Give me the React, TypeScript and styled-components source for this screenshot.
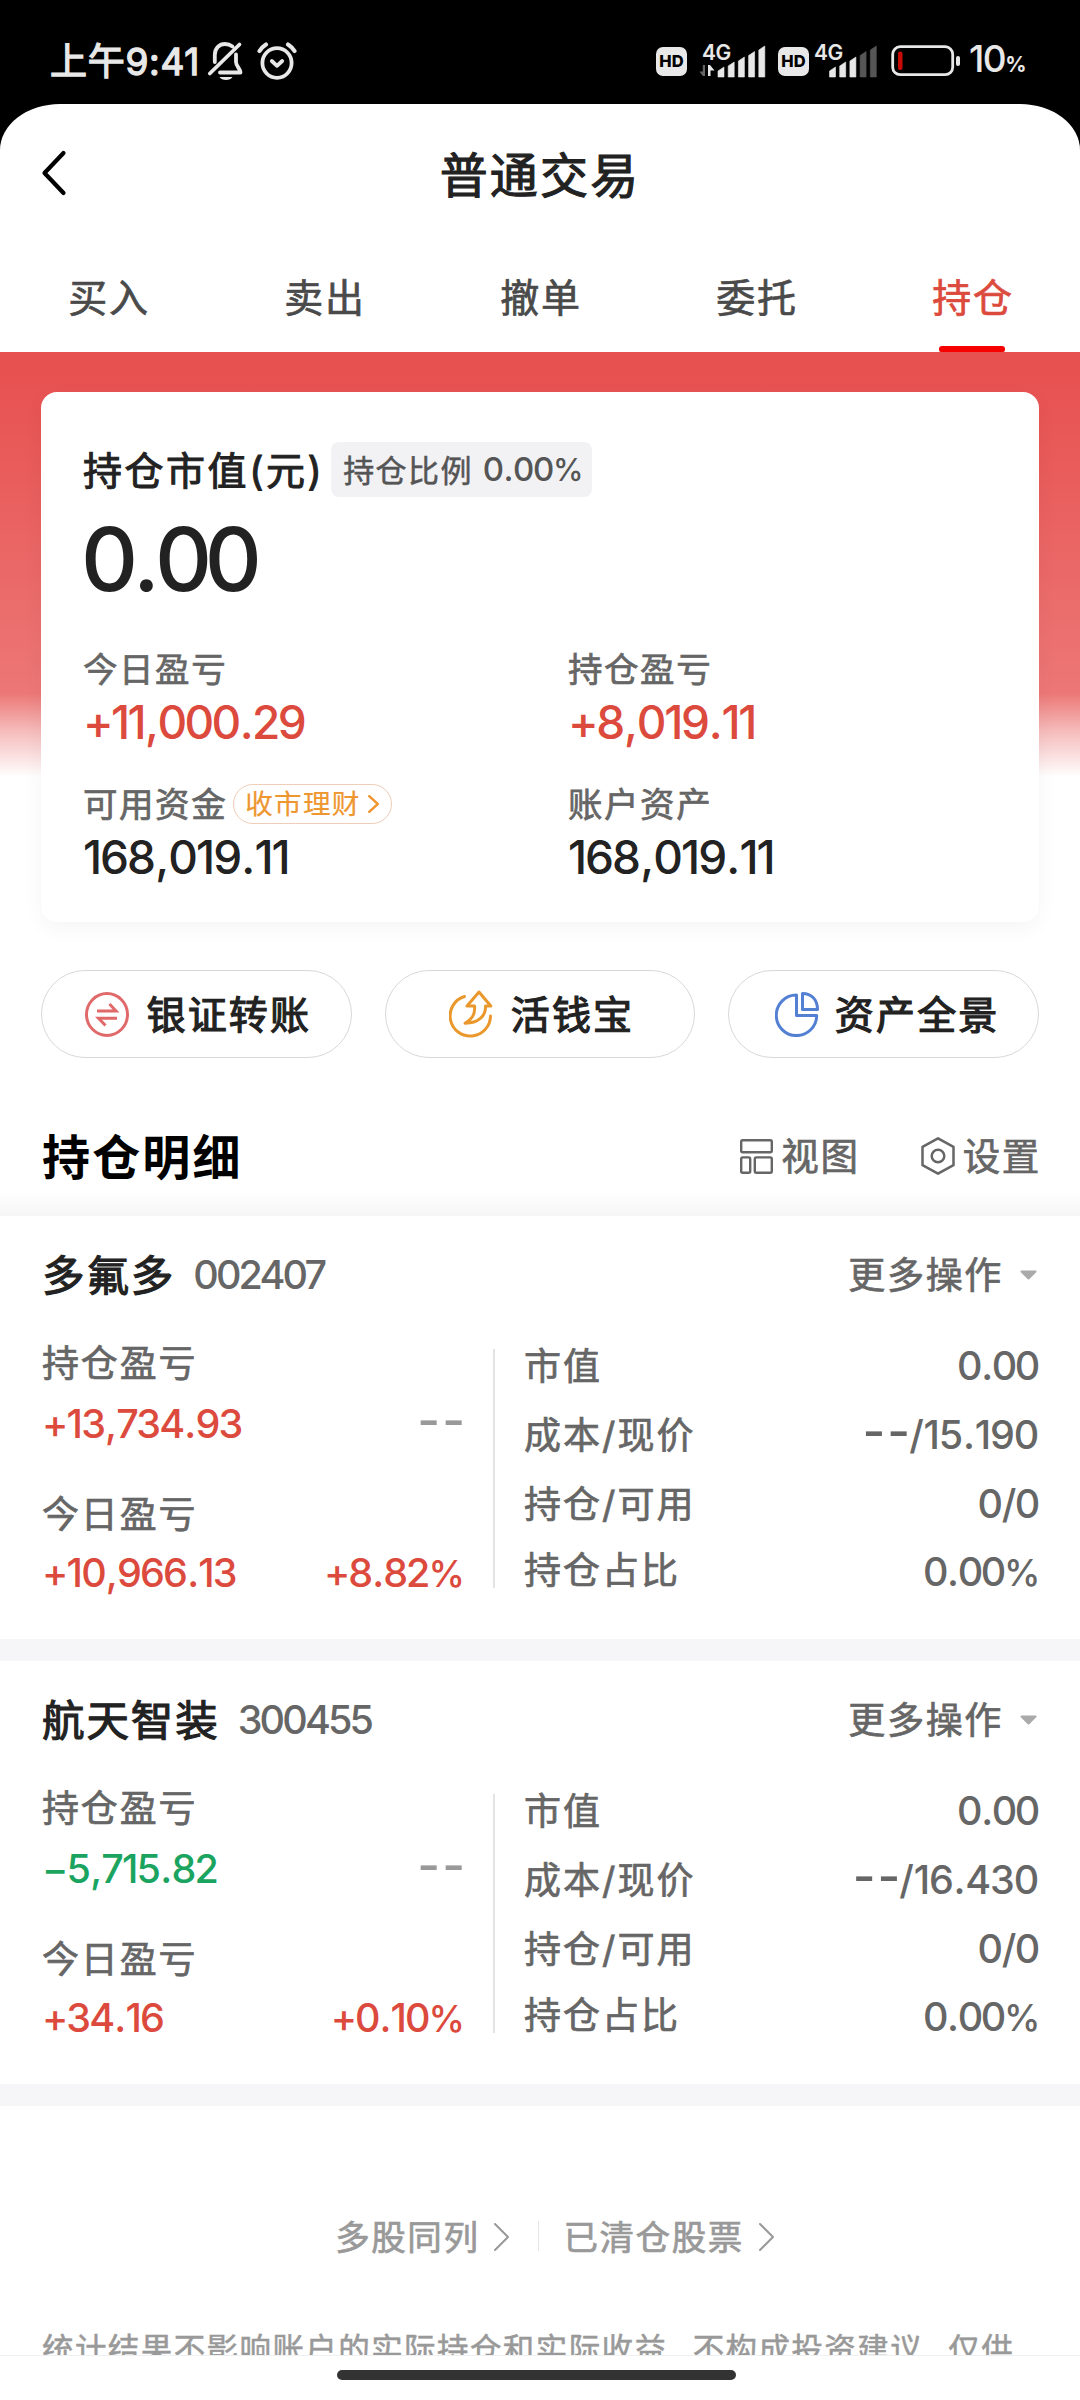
import React from 'react';
import styled, { createGlobalStyle } from 'styled-components';

const RED = '#dc4a3d';
const GREEN = '#1aa45f';

const GlobalStyle = createGlobalStyle`
  * { box-sizing: border-box; }
  html, body { margin: 0; padding: 0; background: #000; }
  body {
    font-family: Inter, "Noto Sans CJK SC", "Noto Sans", sans-serif;
    color: #222;
  }
  svg { display: block; flex: none; }
`;

const Screen = styled.div`
  width: 1080px;
  height: 2400px;
  overflow: hidden;
  display: flex;
  flex-direction: column;
  background: #000;
`;

interface TextProps {
  $size: number;
  $color?: string;
  $weight?: number;
  $stroke?: number;
  $lh?: number;
  $top?: number;
  $track?: number;
}

/* Chinese copy: slightly open tracking, thickened a touch by a hairline stroke */
const Text = styled.span<TextProps>`
  display: block;
  white-space: nowrap;
  padding-top: ${p => p.$top ?? 2}px;
  font-size: ${p => p.$size}px;
  line-height: ${p => p.$lh ?? 46}px;
  color: ${p => p.$color ?? '#666'};
  font-weight: ${p => p.$weight ?? 400};
  letter-spacing: ${p => p.$track ?? 0.045}em;
  -webkit-text-stroke: ${p => p.$stroke ?? 0.7}px currentColor;
`;

/* Figures: tightened tracking */
const NumBox = styled.span<TextProps>`
  display: block;
  white-space: nowrap;
  font-size: ${p => p.$size}px;
  line-height: ${p => p.$lh ?? 46}px;
  color: ${p => p.$color ?? '#666'};
  font-weight: ${p => p.$weight ?? 550};
  letter-spacing: ${p => p.$track ?? -0.05}em;
`;

const Mark = styled.span`
  margin: 0 0.025em;
`;

const PercentSign = styled.span`
  font-size: 0.93em;
`;

const Dash = styled.span`
  margin-right: -0.08em;
  font-size: 1.25em;
  line-height: 0;
  letter-spacing: 0.04em;
`;

/* Prints a figure, giving its separators some air */
function Num({ children, ...rest }: TextProps & { children: string }) {
  return (
    <NumBox {...rest}>
      {children.split(/(--|[.,/%])/).filter(Boolean).map((part, i) => {
        if (part === '--') return <Dash key={i}>{part}</Dash>;
        if (part === '%') return <PercentSign key={i}>{part}</PercentSign>;
        if (/^[.,/]$/.test(part)) return <Mark key={i}>{part}</Mark>;
        return part;
      })}
    </NumBox>
  );
}

/* ---------- status bar ---------- */

const StatusBar = styled.header`
  flex: none;
  height: 104px;
  padding: 26px 55px 0 50px;
  display: flex;
  justify-content: space-between;
`;

const StatusGroup = styled.div`
  display: flex;
  align-items: center;
  height: 70px;
`;

const Clock = styled.span`
  font-size: 37px;
  line-height: 70px;
  padding-top: 2px;
  margin-right: 7px;
  font-weight: 400;
  letter-spacing: 0.7px;
  color: #e8e8e8;
  white-space: nowrap;
  -webkit-text-stroke: 1.3px #e8e8e8;
`;

const HdBadge = styled.span<{ $left: number }>`
  margin-left: ${p => p.$left}px;
  width: 31px;
  height: 29px;
  border-radius: 7px;
  background: #e8e8e8;
  color: #000;
  font-size: 16.5px;
  line-height: 29px;
  font-weight: 800;
  text-align: center;
`;

const Signal = styled.span<{ $left: number; $width: number }>`
  margin-left: ${p => p.$left}px;
  width: ${p => p.$width}px;
  height: 36px;
  display: grid;
`;

const NetType = styled.span<{ $indent?: number }>`
  grid-area: 1 / 1;
  padding-left: ${p => p.$indent ?? 0}px;
  font-size: 21px;
  line-height: 19px;
  font-weight: 600;
  letter-spacing: -0.5px;
  color: #e8e8e8;
`;

const SignalBars = styled.svg`
  grid-area: 1 / 1;
`;

const Percent = styled.span`
  margin-left: 8px;
  padding-top: 1px;
  font-size: 37px;
  line-height: 70px;
  font-weight: 550;
  letter-spacing: -1.5px;
  color: #e8e8e8;
  small { font-size: 21px; font-weight: 650; }
`;

const AlarmWrap = styled.span`
  margin-left: 12px;
`;

function BellOff() {
  return (
    <svg width="38" height="40" viewBox="0 0 38 40" fill="none" stroke="#e8e8e8" strokeWidth="3.8" strokeLinecap="round" strokeLinejoin="round">
      <path d="M7.800 21V14C7.800 7 12.500 3 18 3C21 3 23.500 4 25.500 5.500" />
      <path d="M29 13.500V21C29 25 33.500 28 33.500 31.500H13" />
      <path d="M2.800 32.500L32.500 3.500" />
      <path d="M12.500 36H25.500C23.500 40 14.500 40 12.500 36Z" fill="#e8e8e8" stroke="none" />
    </svg>
  );
}

function Alarm() {
  return (
    <AlarmWrap>
      <svg width="40" height="38" viewBox="0 0 40 38" fill="none" stroke="#e8e8e8" strokeWidth="3.800" strokeLinecap="round" strokeLinejoin="round">
        <ellipse cx="20" cy="21" rx="14.600" ry="14.800" />
        <path d="M14.800 19L20 23.800L25.200 19" />
        <path d="M2.500 9Q5 5 9 2.500M37.500 9Q35 5 31 2.500" strokeWidth="4.200" />
      </svg>
    </AlarmWrap>
  );
}

function Bars({ lit, x, arrows }: { lit: number; x: number; arrows?: boolean }) {
  const tops = [24, 19, 14, 8.5, 3];
  return (
    <SignalBars width="70" height="36" viewBox="0 0 70 36">
      {tops.map((t, i) => {
        const l = x + i * 10.2;
        return (
          <path
            key={t}
            d={`M${l} 34V${t + 4}L${l + 6} ${t}V34Z`}
            fill={i < lit ? '#e8e8e8' : '#565656'}
            stroke={i < lit ? '#e8e8e8' : '#565656'}
            strokeWidth="0.600"
            strokeLinejoin="round"
          />
        );
      })}
      {arrows && (
        <>
          <path d="M6 22V33H3.800L0.500 28.500H3.800V22Z" fill="#666" />
          <path d="M9 33V22H11L15.500 27.500H11.500V33Z" fill="#e8e8e8" />
        </>
      )}
    </SignalBars>
  );
}

const BatteryWrap = styled.span`
  margin-left: 14px;
`;

function Battery() {
  return (
    <BatteryWrap>
      <svg width="70" height="32" viewBox="0 0 70 32">
        <rect x="1.700" y="1.700" width="60" height="28" rx="7.500" fill="none" stroke="#e8e8e8" strokeWidth="2.800" />
        <rect x="7" y="6.500" width="4.500" height="18.500" rx="2" fill="#c80a05" />
        <rect x="65" y="11" width="4" height="10" rx="2" fill="#e8e8e8" />
      </svg>
    </BatteryWrap>
  );
}

/* ---------- page ---------- */

const Page = styled.main`
  flex: 1;
  min-height: 0;
  display: flex;
  flex-direction: column;
  background: #fff;
  border-radius: 60px 60px 0 0 / 46px 46px 0 0;
`;

const TitleBar = styled.div`
  flex: none;
  height: 138px;
  padding: 0 40px;
  display: grid;
  grid-template-columns: 60px 1fr 60px;
  align-items: center;
  justify-items: center;
  svg { justify-self: start; }
`;

const Tabs = styled.nav`
  flex: none;
  height: 110px;
  display: grid;
  grid-template-columns: repeat(5, 1fr);
`;

const Tab = styled.div<{ $active?: boolean }>`
  display: flex;
  flex-direction: column;
  align-items: center;
  justify-content: space-between;
  padding: 31px 0 0;
  &::after {
    content: '';
    width: 66px;
    height: 6px;
    border-radius: 3px 3px 2px 2px;
    background: ${p => (p.$active ? '#f60000' : 'transparent')};
  }
`;

const TabLabel = styled(Text)`
  padding-left: 2px;
`;

const Summary = styled.section`
  flex: none;
  height: 618px;
  padding: 40px 41px 0;
  background: linear-gradient(to bottom, #e75150 0, #e75150 20px, #ec7776 341px, #f6bdbd 380px, #fff 425px);
`;

const Card = styled.div`
  height: 530px;
  padding: 50px 42px 0;
  border-radius: 16px;
  background: #fff;
  box-shadow: 0 6px 22px rgba(0, 0, 0, 0.045);
`;

const CardHead = styled.div`
  display: flex;
  align-items: center;
  height: 55px;
  gap: 7px;
`;

const Chip = styled.div`
  height: 55px;
  width: 261px;
  padding-left: 12px;
  border-radius: 8px;
  background: #f2f2f4;
  display: flex;
  align-items: center;
  gap: 10px;
`;

const Total = styled.div`
  height: 124px;
  margin-left: -2px;
  display: flex;
  align-items: center;
`;

const Stats = styled.div`
  display: grid;
  grid-template-columns: 485px 1fr;
  grid-auto-rows: 135px;
  padding-top: 24px;
`;

const Stat = styled.div`
  padding-top: 1px;
`;

const StatLabel = styled.div`
  display: flex;
  align-items: center;
  height: 46px;
  gap: 6px;
  margin-bottom: 7px;
`;

const Promo = styled.div`
  height: 40px;
  width: 159px;
  padding-left: 11px;
  border: 1.5px solid #efcdb8;
  border-radius: 20px;
  display: flex;
  align-items: center;
  gap: 7px;
`;

const Actions = styled.div`
  flex: none;
  padding: 0 41px;
  display: grid;
  grid-template-columns: repeat(3, 1fr);
  gap: 33px;
  height: 88px;
`;

const Action = styled.div<{ $gap: number; $indent: number }>`
  border: 1px solid #d6d9d9;
  border-radius: 44px;
  padding-left: ${p => p.$indent}px;
  display: flex;
  align-items: center;
  justify-content: center;
  gap: ${p => p.$gap}px;
`;

const SectionHead = styled.div`
  flex: none;
  height: 158px;
  padding: 38px 39px 0 42px;
  display: flex;
  align-items: center;
  justify-content: space-between;
  background: linear-gradient(to bottom, #fff 0, #fff 134px, #f6f6f6 158px);
`;

const Tools = styled.div`
  display: flex;
  gap: 61px;
`;

const Tool = styled.div`
  display: flex;
  align-items: center;
  gap: 8px;
`;

const Stock = styled.section`
  flex: none;
  height: 445px;
  padding: 0 43px 0 42px;
  border-bottom: 22px solid #f6f6f8;
`;

const StockHead = styled.div`
  height: 118px;
  display: flex;
  align-items: center;
  gap: 18px;
`;

const More = styled.div`
  margin-left: auto;
  display: flex;
  align-items: center;
  gap: 17px;
`;

const StockBody = styled.div`
  display: grid;
  grid-template-columns: 421px 32px 1fr;
`;

const Profits = styled.div`
  display: grid;
  grid-template-rows: 62px 89px 60px 46px;
  padding-top: 5px;
`;

const ProfitRow = styled.div`
  display: flex;
  justify-content: space-between;
`;

const Rule = styled.div`
  justify-self: end;
  margin-top: 15px;
  width: 2.500px;
  height: 239px;
  background: #e4e4e4;
`;

const Details = styled.dl`
  margin: -3px -1px 0 29px;
`;

const Detail = styled.div`
  height: 69px;
  display: flex;
  align-items: center;
  justify-content: space-between;
  &:last-child > :first-child { padding: 0 0 3px; }
`;

const Links = styled.div`
  flex: none;
  height: 226px;
  padding: 108px 0 0 29px;
  display: flex;
  justify-content: center;
`;

const Link = styled.div`
  height: 46px;
  display: flex;
  align-items: center;
  gap: 15px;
`;

const LinkRule = styled.div`
  width: 1px;
  height: 30px;
  margin: 7px 24px 0 29px;
  background: #e6e6e6;
`;

const Disclaimer = styled.div`
  flex: none;
  height: 24px;
  padding-left: 42px;
  overflow: hidden;
  border-bottom: 1px solid #f0f0f0;
`;

const Comma = styled.span`
  letter-spacing: -0.2em;
  vertical-align: -5px;
  line-height: 0;
`;

const HomeBar = styled.div`
  flex: none;
  width: 399px;
  height: 10px;
  margin: 14px 0 0 337px;
  border-radius: 5px;
  background: #333;
`;

function Chevron({ w, h, color, stroke }: { w: number; h: number; color: string; stroke: number }) {
  const p = stroke / 2;
  return (
    <svg width={w} height={h} viewBox={`0 0 ${w} ${h}`} fill="none" stroke={color} strokeWidth={stroke} strokeLinecap="round" strokeLinejoin="round">
      <path d={`M${p} ${p}L${w - p} ${h / 2}L${p} ${h - p}`} />
    </svg>
  );
}

function TransferIcon() {
  return (
    <svg width="44" height="45" viewBox="0 0 44 45" fill="none" stroke="#e0696a" strokeWidth="3">
      <ellipse cx="22" cy="22.500" rx="20.500" ry="20.900" />
      <path d="M12 19H31L24.500 12" />
      <path d="M32 26.300H13.500L20.500 33.500" />
    </svg>
  );
}

function CashIcon() {
  return (
    <svg width="44" height="48" viewBox="0 0 44 48" fill="none" stroke="#ea982c" strokeWidth="3" strokeLinecap="round" strokeLinejoin="round">
      <path d="M15.500 6.500A20.200 20.200 0 1 0 41.500 26" />
      <path d="M30 2L41.800 16H36.500C37 26 29 33.500 16 33.300C22 30 26.500 24 25.500 16H18Z" />
    </svg>
  );
}

function PieIcon() {
  return (
    <svg width="44" height="45" viewBox="0 0 44 45" fill="none" stroke="#5480d4" strokeWidth="3" strokeLinejoin="round">
      <path d="M21.500 3A20.200 20.300 0 1 0 41.700 23.500H21.500Z" />
      <path d="M27.500 1.500V17.500H42.500C42.500 7.500 36.500 1.500 27.500 1.500Z" />
    </svg>
  );
}

function LayoutIcon() {
  return (
    <svg width="33" height="35" viewBox="0 0 33 35" fill="none" stroke="#666" strokeWidth="2.400">
      <rect x="1.200" y="1.200" width="30.600" height="12" rx="1.500" />
      <rect x="1.200" y="18.400" width="9" height="15.400" rx="1.500" />
      <rect x="14.800" y="18.400" width="17" height="15.400" rx="1.500" />
    </svg>
  );
}

function SettingIcon() {
  return (
    <svg width="34" height="38" viewBox="0 0 34 38" fill="none" stroke="#666" strokeWidth="2.500" strokeLinejoin="round">
      <path d="M17 1.300L32.500 9.800V28.200L17 36.700L1.500 28.200V9.800Z" />
      <circle cx="17" cy="19" r="6.300" />
    </svg>
  );
}

interface Holding {
  name: string;
  code: string;
  profit: string;
  today: string;
  rate: string;
  price: string;
}

const holdings: Holding[] = [
  { name: '多氟多', code: '002407', profit: '+13,734.93', today: '+10,966.13', rate: '+8.82%', price: '15.190' },
  { name: '航天智装', code: '300455', profit: '−5,715.82', today: '+34.16', rate: '+0.10%', price: '16.430' },
];

const tone = (v: string) => (v.startsWith('+') ? RED : GREEN);

function StockItem({ h }: { h: Holding }) {
  const rows: [string, string][] = [
    ['市值', '0.00'],
    ['成本/现价', `--/${h.price}`],
    ['持仓/可用', '0/0'],
    ['持仓占比', '0.00%'],
  ];
  return (
    <Stock>
      <StockHead>
        <Text $size={42.5} $color="#222" $stroke={1.1}>{h.name}</Text>
        <Num $size={39.5} $weight={500} $track={-0.072}>{h.code}</Num>
        <More>
          <Text $size={37}>更多操作</Text>
          <svg width="17" height="10" viewBox="0 0 17 10"><path d="M1.500 1.500H15.500L8.500 8.500Z" fill="#aaa" stroke="#aaa" strokeWidth="2" strokeLinejoin="round" /></svg>
        </More>
      </StockHead>
      <StockBody>
        <Profits>
          <Text $size={37} $track={0.05}>持仓盈亏</Text>
          <ProfitRow>
            <Num $size={39.5} $color={tone(h.profit)} $track={-0.046}>{h.profit}</Num>
            <Num $size={39.5} $color="#999">--</Num>
          </ProfitRow>
          <Text $size={37} $track={0.05}>今日盈亏</Text>
          <ProfitRow>
            <Num $size={39.5} $color={tone(h.today)} $track={-0.046}>{h.today}</Num>
            <Num $size={39.5} $color={tone(h.rate)}>{h.rate}</Num>
          </ProfitRow>
        </Profits>
        <Rule />
        <Details>
          {rows.map(([label, value]) => (
            <Detail key={label}>
              <Text $size={37} $track={0.055}>{label}</Text>
              <Num $size={39.5} $weight={500} $track={value.startsWith('--') ? -0.03 : -0.06}>{value}</Num>
            </Detail>
          ))}
        </Details>
      </StockBody>
    </Stock>
  );
}

export default function App() {
  return (
    <Screen lang="zh-CN">
      <GlobalStyle />
      <StatusBar>
        <StatusGroup>
          <Clock>上午9:41</Clock>
          <BellOff />
          <Alarm />
        </StatusGroup>
        <StatusGroup>
          <HdBadge $left={0}>HD</HdBadge>
          <Signal $left={12} $width={67}>
            <NetType $indent={3}>4G</NetType>
            <Bars lit={5} x={19} arrows />
          </Signal>
          <HdBadge $left={12}>HD</HdBadge>
          <Signal $left={5} $width={63}>
            <NetType>4G</NetType>
            <Bars lit={3} x={15.5} />
          </Signal>
          <Battery />
          <Percent>10<small>%</small></Percent>
        </StatusGroup>
      </StatusBar>

      <Page>
        <TitleBar>
          <svg width="27" height="46" viewBox="0 0 27 46" fill="none" stroke="#000" strokeWidth="4.200" strokeLinecap="round" strokeLinejoin="round">
            <path d="M23.500 3L4.500 23L23.500 43" />
          </svg>
          <Text $size={48} $lh={60} $top={5} $color="#222" $stroke={1.1}>普通交易</Text>
        </TitleBar>

        <Tabs>
          {['买入', '卖出', '撤单', '委托', '持仓'].map(t => (
            <Tab key={t} $active={t === '持仓'}>
              <TabLabel $size={39} $color={t === '持仓' ? RED : '#4a4a4a'}>{t}</TabLabel>
            </Tab>
          ))}
        </Tabs>

        <Summary>
          <Card>
            <CardHead>
              <Text $size={39} $color="#222" $stroke={1} $track={0.065}>持仓市值(元)</Text>
              <Chip>
                <Text $size={31} $color="#555" $stroke={0.5}>持仓比例</Text>
                <Num $size={33} $weight={450} $color="#555" $track={-0.04}>0.00%</Num>
              </Chip>
            </CardHead>
            <Total>
              <Num $size={88.5} $lh={100} $color="#222" $weight={500} $track={-0.082}>0.00</Num>
            </Total>
            <Stats>
              <Stat>
                <StatLabel><Text $size={34.5}>今日盈亏</Text></StatLabel>
                <Num $size={46} $color={RED} $track={-0.058}>+11,000.29</Num>
              </Stat>
              <Stat>
                <StatLabel><Text $size={34.5}>持仓盈亏</Text></StatLabel>
                <Num $size={46} $color={RED} $track={-0.051}>+8,019.11</Num>
              </Stat>
              <Stat>
                <StatLabel>
                  <Text $size={34.5}>可用资金</Text>
                  <Promo>
                    <Text $size={27.6} $lh={37} $top={1} $color="#ee9630" $stroke={0.2}>收市理财</Text>
                    <Chevron w={11} h={18} color="#ee9630" stroke={2.4} />
                  </Promo>
                </StatLabel>
                <Num $size={46} $color="#222" $track={-0.043}>168,019.11</Num>
              </Stat>
              <Stat>
                <StatLabel><Text $size={34.5}>账户资产</Text></StatLabel>
                <Num $size={46} $color="#222" $track={-0.043}>168,019.11</Num>
              </Stat>
            </Stats>
          </Card>
        </Summary>

        <Actions>
          <Action $gap={18} $indent={3}><TransferIcon /><Text $size={39} $color="#222" $stroke={1.2} $track={0.055}>银证转账</Text></Action>
          <Action $gap={18} $indent={3}><CashIcon /><Text $size={39} $color="#222" $stroke={1.2} $track={0.055}>活钱宝</Text></Action>
          <Action $gap={16} $indent={7}><PieIcon /><Text $size={39} $color="#222" $stroke={1.2} $track={0.055}>资产全景</Text></Action>
        </Actions>

        <SectionHead>
          <Text $size={48} $lh={60} $top={4} $color="#000" $weight={600} $stroke={0}>持仓明细</Text>
          <Tools>
            <Tool><LayoutIcon /><Text $size={37.5}>视图</Text></Tool>
            <Tool><SettingIcon /><Text $size={37.5}>设置</Text></Tool>
          </Tools>
        </SectionHead>

        {holdings.map(h => <StockItem key={h.code} h={h} />)}

        <Links>
          <Link><Text $size={34.5} $color="#999">多股同列</Text><Chevron w={15} h={28} color="#999" stroke={2} /></Link>
          <LinkRule />
          <Link><Text $size={34.5} $color="#999">已清仓股票</Text><Chevron w={15} h={28} color="#999" stroke={2} /></Link>
        </Links>

        <Disclaimer>
          <Text $size={31.5} $lh={36} $top={0} $color="#999" $stroke={0.5}>
            统计结果不影响账户的实际持仓和实际收益<Comma>，</Comma>不构成投资建议<Comma>，</Comma>仅供
          </Text>
        </Disclaimer>
        <HomeBar />
      </Page>
    </Screen>
  );
}
